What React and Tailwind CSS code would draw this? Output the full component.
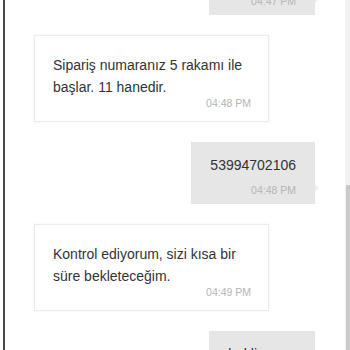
import React from 'react';

const messages = [
  { id: 1, side: 'right', text: 'bekliyorum', time: '04:47 PM' },
  { id: 2, side: 'left', text: 'Sipariş numaranız 5 rakamı ile başlar. 11 hanedir.', time: '04:48 PM' },
  { id: 3, side: 'right', text: '53994702106', time: '04:48 PM' },
  { id: 4, side: 'left', text: 'Kontrol ediyorum, sizi kısa bir süre bekleteceğim.', time: '04:49 PM' },
  { id: 5, side: 'right', text: 'bekliyorum', time: '04:49 PM' },
];

const LeftBubble = ({ msg }) => (
  <div className="flex justify-start pl-[29px]">
    <div className="w-[235px] bg-white border border-[#ececec] shadow-[0_0_3px_rgba(0,0,0,0.05)] pl-[18px] pr-[17px] pt-[18px] pb-[13px]">
      <p className="text-[14px] leading-[22px] text-[#333]">{msg.text}</p>
      <div className="text-right text-[10.5px] leading-[10px] text-[#b5b5b5]">{msg.time}</div>
    </div>
  </div>
);

const RightBubble = ({ msg }) => (
  <div className="flex justify-end pr-[30px]">
    <div className="relative bg-[#e6e6e6] px-[19px] pt-[12px] pb-[9px] text-right">
      <p className="text-[14px] leading-[22px] text-[#333]">{msg.text}</p>
      <div className="text-[10.5px] leading-[10px] mt-[9px] text-[#b5b5b5]">{msg.time}</div>
      {/* tail */}
      <span className="absolute right-[-4px] bottom-[12px] w-0 h-0 border-y-[4px] border-y-transparent border-l-[4px] border-l-[#efefef]"></span>
    </div>
  </div>
);

const App = () => {
  return (
    <div className="w-[350px] h-[350px] overflow-hidden bg-white flex" style={{ fontFamily: '"Liberation Sans", Arial, sans-serif' }}>
      <div className="w-[3px] shrink-0"></div>
      <div className="w-[2px] shrink-0 bg-[#4a4a4a]"></div>

      {/* Chat list */}
      <div className="flex-1 flex flex-col gap-[20px] -mt-[47px]">
        {messages.map((m) =>
          m.side === 'left' ? <LeftBubble key={m.id} msg={m} /> : <RightBubble key={m.id} msg={m} />
        )}
      </div>

      {/* Scrollbar */}
      <div className="w-[5px] shrink-0 bg-[#f2f2f2] flex flex-col">
        <div className="h-[185px]"></div>
        <div className="flex-1 ml-[1px] bg-[#cacaca]"></div>
      </div>
    </div>
  );
};

export default App;
